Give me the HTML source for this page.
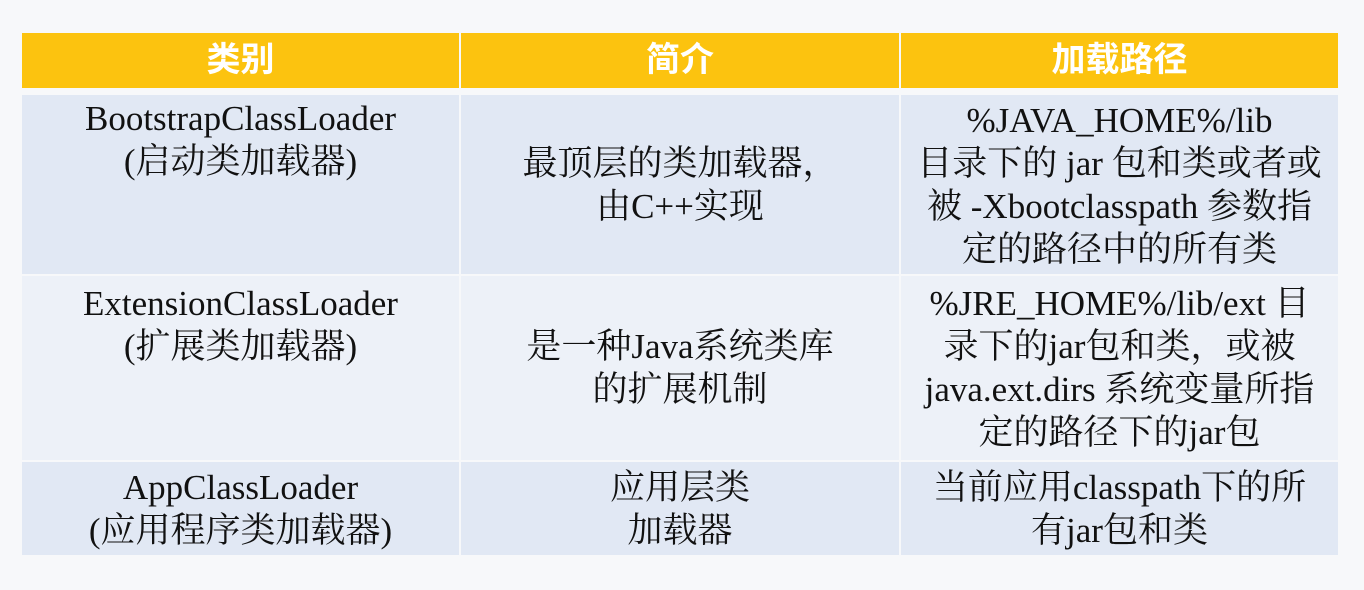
<!DOCTYPE html><html><head><meta charset="utf-8"><style>
body{margin:0;width:1364px;height:590px;background:#f7f8fa;position:relative;overflow:hidden;font-family:"Liberation Serif","Noto Serif CJK SC",serif;color:#111}
.c{position:absolute;display:flex;align-items:center;justify-content:center;text-align:center;font-size:35px;line-height:43px;white-space:nowrap}
.h{background:#fcc30f;color:#fff;font-family:"Liberation Sans","Noto Sans CJK SC",sans-serif;font-size:34px;font-weight:bold;top:33px;height:55px}
.a{background:#e1e8f4}.b{background:#edf1f8}
</style></head><body>
<div class="c h" style="left:22px;width:437px">类别</div>
<div class="c h" style="left:461px;width:438px">简介</div>
<div class="c h" style="left:901px;width:437px">加载路径</div>

<div class="c a" style="left:22px;width:437px;top:95px;height:179px;align-items:flex-start"><div style="margin-top:2px">BootstrapClassLoader<br>(启动类加载器)</div></div>
<div class="c a" style="left:461px;width:438px;top:95px;height:179px"><div>最顶层的类加载器，<br>由C++实现</div></div>
<div class="c a" style="left:901px;width:437px;top:95px;height:179px"><div>%JAVA_HOME%/lib<br>目录下的 jar 包和类或者或<br>被 -Xbootclasspath 参数指<br>定的路径中的所有类</div></div>

<div class="c b" style="left:22px;width:437px;top:276px;height:184px;align-items:flex-start"><div style="margin-top:6px">ExtensionClassLoader<br>(扩展类加载器)</div></div>
<div class="c b" style="left:461px;width:438px;top:276px;height:184px"><div>是一种Java系统类库<br>的扩展机制</div></div>
<div class="c b" style="left:901px;width:437px;top:276px;height:184px"><div>%JRE_HOME%/lib/ext 目<br>录下的jar包和类，或被<br>java.ext.dirs 系统变量所指<br>定的路径下的jar包</div></div>

<div class="c a" style="left:22px;width:437px;top:462px;height:93px"><div>AppClassLoader<br>(应用程序类加载器)</div></div>
<div class="c a" style="left:461px;width:438px;top:462px;height:93px"><div>应用层类<br>加载器</div></div>
<div class="c a" style="left:901px;width:437px;top:462px;height:93px"><div>当前应用classpath下的所<br>有jar包和类</div></div>
</body></html>
